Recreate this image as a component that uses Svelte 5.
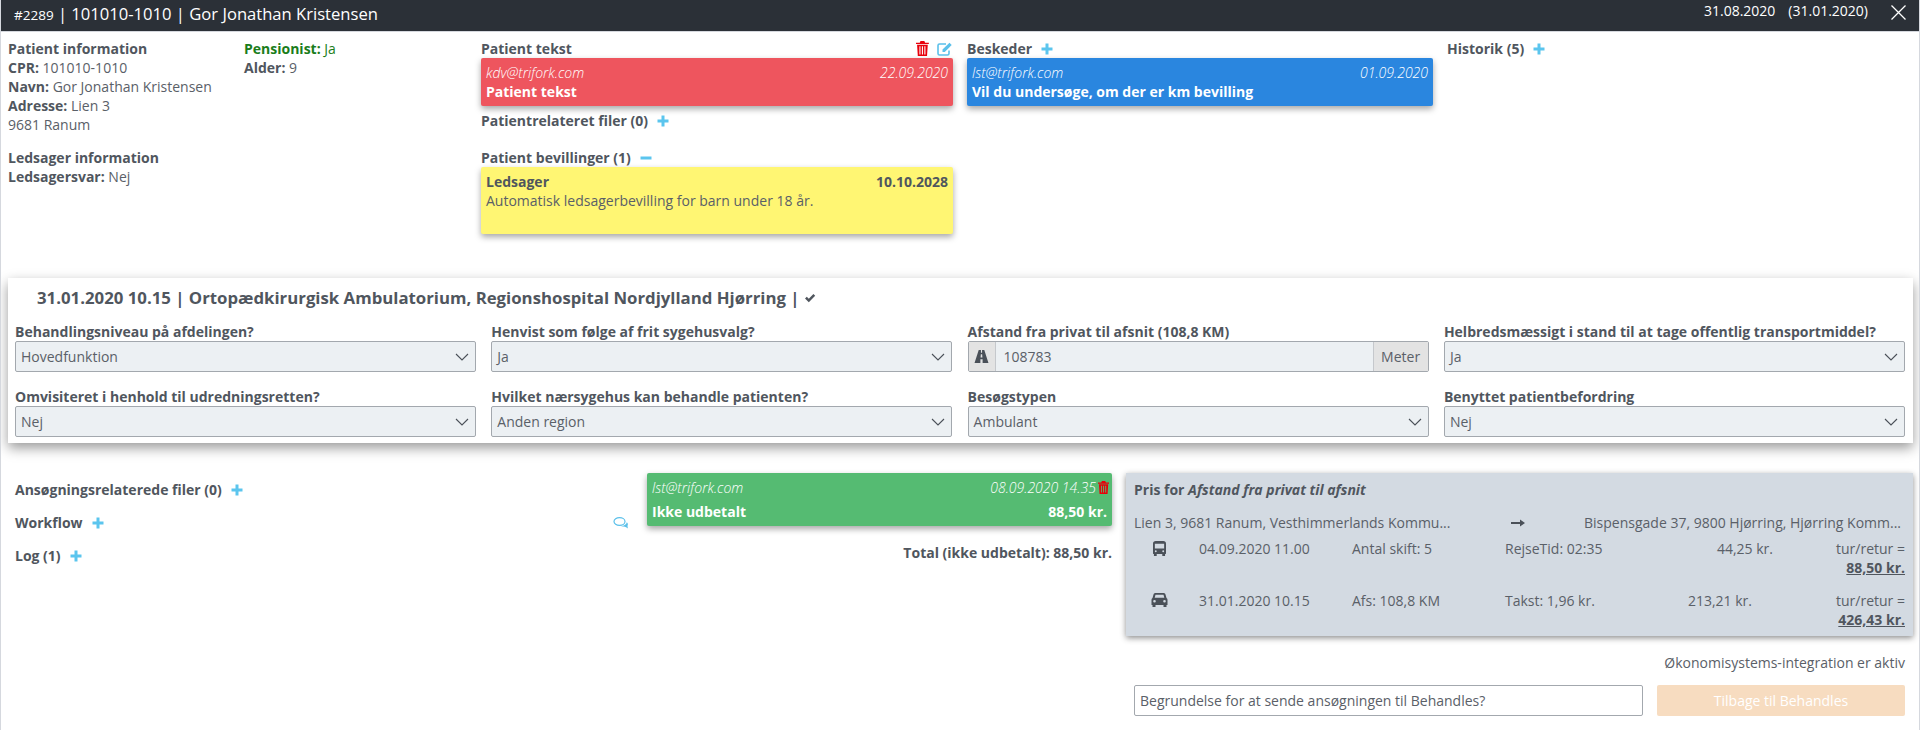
<script>
  const selectsTop = [
    { label: 'Behandlingsniveau på afdelingen?', value: 'Hovedfunktion' },
    { label: 'Henvist som følge af frit sygehusvalg?', value: 'Ja' },
    null,
    { label: 'Helbredsmæssigt i stand til at tage offentlig transportmiddel?', value: 'Ja' },
  ];
  const selectsBottom = [
    { label: 'Omvisiteret i henhold til udredningsretten?', value: 'Nej' },
    { label: 'Hvilket nærsygehus kan behandle patienten?', value: 'Anden region' },
    { label: 'Besøgstypen', value: 'Ambulant' },
    { label: 'Benyttet patientbefordring', value: 'Nej' },
  ];
  const fields = [...selectsTop, ...selectsBottom];
</script>

{#snippet plus()}
  <svg class="plus" viewBox="0 0 12 12" width="12" height="12"><path d="M4.5 0.5h3v4h4v3h-4v4h-3v-4h-4v-3h4z" /></svg>
{/snippet}

{#snippet trash(size)}
  <svg viewBox="0 0 12 14" width={size * 12 / 14} height={size} fill="#e8000b">
    <path d="M4.2 0h3.6l.7 1.6H12v1.3H0V1.600h3.500zM1 3.600h10l-.7 10.400H1.700zM3.200 5v7.500h1V5zM5.500 5v7.500h1V5zM7.800 5v7.500h1V5z" fill-rule="evenodd" />
  </svg>
{/snippet}

<div class="modal">
  <header class="topbar">
    <div class="title"><small>#2289</small> | 101010-1010 | Gor Jonathan Kristensen</div>
    <div class="dates">
      <span>31.08.2020</span>
      <span>(31.01.2020)</span>
      <svg class="close" viewBox="0 0 15 15" width="15" height="15"><path d="M0.500 0.500 14.500 14.500M14.500 0.500 0.500 14.500" /></svg>
    </div>
  </header>

  <section class="overview">
    <div class="info">
      <div class="info-cols">
        <div>
          <p><b>Patient information</b></p>
          <p><b>CPR:</b> 101010-1010</p>
          <p><b>Navn:</b> Gor Jonathan Kristensen</p>
          <p><b>Adresse:</b> Lien 3</p>
          <p>9681 Ranum</p>
        </div>
        <div>
          <p class="green"><b>Pensionist:</b> Ja</p>
          <p><b>Alder:</b> 9</p>
        </div>
      </div>
      <div class="companion">
        <p><b>Ledsager information</b></p>
        <p><b>Ledsagersvar:</b> Nej</p>
      </div>
    </div>

    <div class="patient">
      <div class="heading">
        <b>Patient tekst</b>
        <span class="tools">
          {@render trash(15)}
          <svg viewBox="0 0 16 14" width="16" height="14" fill="none" stroke="#5bc0ea" stroke-width="1.600">
            <path d="M12 8.500v3a1.500 1.500 0 0 1-1.500 1.500h-8A1.500 1.500 0 0 1 1 11.500v-8A1.500 1.500 0 0 1 2.500 2H9" />
            <path d="M5.500 7.500 12.500 0.800l2.200 2.200L7.800 10H5.500z" fill="#5bc0ea" stroke="none" />
          </svg>
        </span>
      </div>
      <div class="note red">
        <div class="note-meta"><i>kdv@trifork.com</i><i>22.09.2020</i></div>
        <b>Patient tekst</b>
      </div>
      <div class="heading files"><b>Patientrelateret filer (0)</b>{@render plus()}</div>
      <div class="heading grants">
        <b>Patient bevillinger (1)</b>
        <svg class="plus" viewBox="0 0 12 12" width="12" height="12"><path d="M0.500 4.500h11v3h-11z" /></svg>
      </div>
      <div class="note yellow">
        <div class="note-meta"><b>Ledsager</b><b>10.10.2028</b></div>
        <div>Automatisk ledsagerbevilling for barn under 18 år.</div>
      </div>
    </div>

    <div class="messages">
      <div class="heading"><b>Beskeder</b>{@render plus()}</div>
      <div class="note blue">
        <div class="note-meta"><i>lst@trifork.com</i><i>01.09.2020</i></div>
        <b>Vil du undersøge, om der er km bevilling</b>
      </div>
    </div>

    <div class="history">
      <div class="heading"><b>Historik (5)</b>{@render plus()}</div>
    </div>
  </section>

  <section class="visit">
    <h2>
      31.01.2020 10.15 | Ortopædkirurgisk Ambulatorium, Regionshospital Nordjylland Hjørring |
      <svg viewBox="0 0 12 12" width="12" height="12"><path d="M1 6.500 2.800 4.700 4.800 6.800 9.400 2 11.200 3.800 4.800 10.300z" fill="#50565e" /></svg>
    </h2>
    <div class="fields">
      {#each fields as field}
        <div class="field">
          {#if field}
            <div class="label">{field.label}</div>
            <div class="select">
              <span>{field.value}</span>
              <svg viewBox="0 0 14 8" width="14" height="8"><path d="M1 1 7 7 13 1" fill="none" stroke="#4a5058" stroke-width="1.100" /></svg>
            </div>
          {:else}
            <div class="label">Afstand fra privat til afsnit (108,8 KM)</div>
            <div class="input-group">
              <span class="addon road">
                <svg viewBox="0 0 16 14" width="15" height="13"><path d="M5 0h2.400v3h1.200V0H11l4.500 14H9.200V10H6.800v4H.5zM7.300 4.500 7 8h2l-.3-3.500z" fill="#4a5058" fill-rule="evenodd" /></svg>
              </span>
              <span class="input-value">108783</span>
              <span class="addon meter">Meter</span>
            </div>
          {/if}
        </div>
      {/each}
    </div>
  </section>

  <section class="lower">
    <div class="links">
      <div class="heading"><b>Ansøgningsrelaterede filer (0)</b>{@render plus()}</div>
      <div class="heading"><b>Workflow</b>{@render plus()}</div>
      <div class="heading"><b>Log (1)</b>{@render plus()}</div>
    </div>

    <svg class="chat" viewBox="0 0 16 12" width="16" height="12" fill="none" stroke="#5bc0ea" stroke-width="1.200">
      <ellipse cx="6.500" cy="4.500" rx="5.500" ry="3.800" />
      <path d="M8 9.200c3 .6 5 .2 7 2.300-.4-1.700-.6-2.300-.4-3 .6-1.200 .3-2.500-.8-3.300-.4 2-2.400 3.600-5.800 4z" fill="#5bc0ea" stroke="none" />
    </svg>

    <div class="payment">
      <div class="note green-note">
        <div class="note-meta">
          <i>lst@trifork.com</i>
          <span class="stamp"><i>08.09.2020 14.35</i>{@render trash(13)}</span>
        </div>
        <div class="note-meta strong"><b>Ikke udbetalt</b><b>88,50 kr.</b></div>
      </div>
      <div class="total">Total (ikke udbetalt): 88,50 kr.</div>
    </div>

    <div class="side">
      <div class="price">
        <div class="price-title"><b>Pris for <i>Afstand fra privat til afsnit</i></b></div>
        <div class="route">
          <span class="from">Lien 3, 9681 Ranum, Vesthimmerlands Kommu...</span>
          <svg viewBox="0 0 14 10" width="14" height="10"><path d="M0 4h9V1.500L14 5 9 8.500V6H0z" fill="#4a5058" /></svg>
          <span class="to">Bispensgade 37, 9800 Hjørring, Hjørring Komm...</span>
        </div>
        <div class="trip">
          <svg viewBox="0 0 14 16" width="13" height="15" fill="#4a5058"><path fill-rule="evenodd" d="M3 0h8a3 3 0 0 1 3 3v10a1 1 0 0 1-1 1v2h-3v-2H4v2H1v-2a1 1 0 0 1-1-1V3a3 3 0 0 1 3-3zM2 3v5h10V3zM3 10a1 1 0 1 0 0 2 1 1 0 0 0 0-2zM11 10a1 1 0 1 0 0 2 1 1 0 0 0 0-2z" /></svg>
          <span>04.09.2020 11.00</span>
          <span>Antal skift: 5</span>
          <span>RejseTid: 02:35</span>
          <span class="amount first">44,25 kr.</span>
          <span class="sum">tur/retur =<br /><b>88,50 kr.</b></span>
        </div>
        <div class="trip">
          <svg viewBox="0 0 16 14" width="17" height="14" fill="#4a5058"><path fill-rule="evenodd" d="M4 0h8c1 0 1.600 .5 2 1.500L15 5c.7 .4 1 1 1 1.800V12h-1v2h-3v-2H4v2H1v-2H0V6.800C0 6 .3 5.400 1 5l1-3.500C2.400 .5 3 0 4 0zM4 1.800 3.200 4.800h9.600L12 1.800zM3 7a1.300 1.300 0 1 0 0 2.600A1.300 1.300 0 0 0 3 7zM13 7a1.300 1.300 0 1 0 0 2.600A1.300 1.300 0 0 0 13 7z" /></svg>
          <span>31.01.2020 10.15</span>
          <span>Afs: 108,8 KM</span>
          <span>Takst: 1,96 kr.</span>
          <span class="amount second">213,21 kr.</span>
          <span class="sum">tur/retur =<br /><b>426,43 kr.</b></span>
        </div>
      </div>
      <div class="integration">Økonomisystems-integration er aktiv</div>
      <div class="actions">
        <div class="reason">Begrundelse for at sende ansøgningen til Behandles?</div>
        <button class="back">Tilbage til Behandles</button>
      </div>
    </div>
  </section>
</div>

<style>
  :global(body) {
    margin: 0;
    background: #fff;
  }

  .modal {
    height: 730px;
    box-sizing: border-box;
    overflow: hidden;
    border-left: 1px solid #d5d8de;
    border-right: 1px solid #d5d8de;
    font-family: "Open Sans", "Liberation Sans", sans-serif;
    font-size: 14px;
    line-height: 19px;
    color: #5a6068;
  }

  p {
    margin: 0;
  }

  b {
    font-weight: 700;
    color: #50565e;
  }

  i {
    font-weight: 300;
  }

  .price-title i {
    font-weight: 700;
  }

  .topbar {
    height: 32px;
    box-sizing: border-box;
    margin: 0 -1px;
    padding: 0 14px;
    display: flex;
    justify-content: space-between;
    background: #2b3037;
    color: #fff;
    border-bottom: 1px solid #d5d8de;
  }

  .title {
    font-size: 16.600px;
    line-height: 27px;
  }

  .title small {
    font-size: 13.500px;
  }

  .dates {
    display: flex;
    gap: 13px;
    font-size: 14px;
    line-height: 22px;
  }

  .close {
    margin: 5px 0 0 10px;
    fill: none;
    stroke: #fff;
    stroke-width: 1.300;
  }

  .overview {
    display: flex;
    padding: 7px 0 0 7px;
    height: 246px;
    box-sizing: border-box;
  }

  .info {
    width: 473px;
  }

  .info-cols {
    display: flex;
  }

  .info-cols > div:first-child {
    width: 236px;
  }

  .green,
  .green b {
    color: #1a7d1a;
  }

  .companion {
    margin-top: 14px;
  }

  .patient {
    width: 472px;
  }

  .messages {
    width: 466px;
    margin-left: 14px;
  }

  .history {
    margin-left: 14px;
  }

  .heading {
    display: flex;
    align-items: center;
    gap: 9px;
    height: 19px;
  }

  .plus {
    fill: #5bc5ee;
  }

  .tools {
    margin-left: auto;
    display: flex;
    align-items: center;
    gap: 8px;
  }

  .note {
    padding: 5px;
    border-radius: 2px;
    box-shadow: 0 3px 6px rgba(0, 0, 0, 0.35);
    box-sizing: border-box;
  }

  .note-meta {
    display: flex;
    justify-content: space-between;
    align-items: center;
    height: 19px;
  }

  .red,
  .blue,
  .green-note {
    color: #fff;
    height: 48px;
  }

  .red b,
  .blue b,
  .green-note b {
    color: #fff;
  }

  .red {
    background: #ee555e;
  }

  .blue {
    background: #2a86df;
  }

  .yellow {
    background: #fff673;
    height: 67px;
  }

  .files {
    margin-top: 5px;
  }

  .grants {
    margin-top: 18px;
  }

  .visit {
    margin: 0 6px 0 7px;
    height: 165px;
    box-sizing: border-box;
    padding: 9px 7px 0;
    background: #fff;
    box-shadow: 0 5px 12px rgba(0, 0, 0, 0.4);
  }

  h2 {
    margin: 0 0 0 22px;
    font-size: 16.800px;
    line-height: 22px;
    font-weight: 700;
    color: #50565e;
  }

  .fields {
    margin-top: 15px;
    display: grid;
    grid-template-columns: repeat(4, 461px);
    column-gap: 15.300px;
    row-gap: 17px;
  }

  .label {
    font-weight: 700;
    height: 17px;
    line-height: 15px;
    white-space: nowrap;
    color: #50565e;
  }

  .select,
  .input-group {
    height: 31px;
    box-sizing: border-box;
    border: 1px solid #a3a8ae;
    border-radius: 2px;
    background: #ecf0f3;
    display: flex;
    align-items: center;
  }

  .select {
    justify-content: space-between;
    padding: 0 6px 0 5px;
  }

  .input-group {
    align-items: stretch;
  }

  .addon {
    background: #e3e3e3;
    display: flex;
    align-items: center;
    justify-content: center;
  }

  .road {
    width: 26px;
    border-right: 1px solid #c5c8cc;
  }

  .meter {
    width: 54px;
    border-left: 1px solid #c5c8cc;
  }

  .input-value {
    flex: 1;
    padding-left: 8px;
    line-height: 29px;
  }

  .lower {
    display: flex;
    margin: 30px 6px 0 7px;
  }

  .links {
    flex: none;
    width: 603px;
    box-sizing: border-box;
    padding: 7px 0 0 7px;
    display: flex;
    flex-direction: column;
    gap: 14px;
  }

  .chat {
    flex: none;
    margin: 44px 0 0 2px;
  }

  .payment {
    flex: none;
    width: 465px;
    margin-left: 18px;
  }

  .green-note {
    background: #55bb72;
    height: 53px;
  }

  .strong {
    margin-top: 5px;
  }

  .stamp {
    display: flex;
    align-items: center;
    gap: 2px;
    margin-right: -2px;
  }

  .total {
    margin-top: 17px;
    font-weight: 700;
    text-align: right;
    color: #50565e;
  }

  .side {
    flex: none;
    width: 787px;
    margin-left: 14px;
  }

  .price {
    height: 163px;
    box-sizing: border-box;
    padding: 7px 8px 0;
    background: #d3dae2;
    box-shadow: 0 2px 6px rgba(0, 0, 0, 0.45);
  }

  .route {
    display: flex;
    align-items: center;
    margin-top: 14px;
    white-space: nowrap;
  }

  .from {
    width: 377px;
  }

  .route svg {
    margin-right: 59px;
  }

  .trip {
    display: grid;
    grid-template-columns: 65px 153px 153px 134px 134px 132px;
    margin-top: 7px;
    height: 38px;
  }

  .trip + .trip {
    margin-top: 14px;
  }

  .trip svg {
    justify-self: center;
    margin: 2px 15px 0 0;
  }

  .amount.first {
    justify-self: end;
  }

  .amount.second {
    justify-self: end;
    margin-right: 21px;
  }

  .sum {
    text-align: right;
  }

  .sum b {
    text-decoration: underline;
  }

  .integration {
    margin-top: 17px;
    padding-right: 8px;
    text-align: right;
  }

  .actions {
    display: flex;
    margin-top: 13px;
    padding: 0 8px;
    gap: 14px;
  }

  .reason {
    width: 509px;
    height: 31px;
    box-sizing: border-box;
    padding-left: 5px;
    border: 1px solid #a3a8ae;
    border-radius: 2px;
    line-height: 29px;
  }

  .back {
    flex: 1;
    height: 31px;
    border: 0;
    border-radius: 2px;
    background: #f7dcc0;
    color: #fff;
    font: inherit;
  }
</style>
